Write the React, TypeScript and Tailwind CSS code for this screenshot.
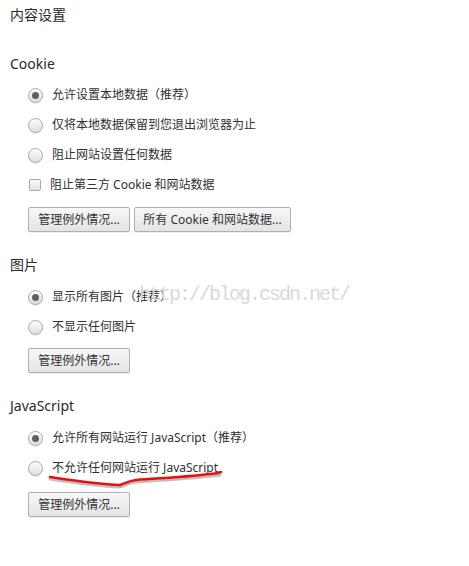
import type {ReactNode} from "react";

const font = {fontFamily: '"Noto Sans", "Noto Sans CJK SC", sans-serif'};

function Radio({checked, label}: {checked?: boolean; label: string}) {
    return (
        <div className="flex h-[30px] items-center pl-[18px]">
            <span className="flex h-[15px] w-[15px] items-center justify-center rounded-full border border-[#a9a9a9] bg-gradient-to-b from-[#fdfdfd] to-[#dedede] shadow-[0_1px_1px_rgba(0,0,0,0.08)]">
                {checked && <span className="h-[7px] w-[7px] rounded-full bg-[#5f5f5f]" />}
            </span>
            <span className="ml-[9px] text-[12px] text-[#303030]">{label}</span>
        </div>
    );
}

function Checkbox({label}: {label: string}) {
    return (
        <div className="flex h-[30px] items-center pl-[19px]">
            <span className="h-[12px] w-[12px] rounded-[2px] border border-[#a9a9a9] bg-gradient-to-b from-[#fbfbfb] to-[#e2e2e2]" />
            <span className="ml-[9px] text-[12px] text-[#303030]">{label}</span>
        </div>
    );
}

function Button({children, w}: {children: ReactNode; w: string}) {
    return (
        <button className={`flex h-[25px] ${w} items-center justify-center rounded-[2px] border border-[#b0b0b0] bg-gradient-to-b from-[#f7f7f7] to-[#e4e4e4] text-[12px] text-[#333] shadow-[0_1px_0_rgba(0,0,0,0.06)]`}>
            {children}
        </button>
    );
}

function Heading({children, mt}: {children: ReactNode; mt: string}) {
    return <div className={`${mt} flex h-[20px] items-center text-[14px] text-[#2a2a2a]`}>{children}</div>;
}

export default function App() {
    return (
        <div className="relative h-[566px] w-[469px] overflow-hidden bg-white" style={font}>
            <div className="flex flex-col px-[10px] pt-[4px]">
                <div className="flex h-[20px] items-center text-[14px] text-[#2a2a2a]">内容设置</div>

                {/* Cookie */}
                <Heading mt="mt-[29px]">Cookie</Heading>
                <div className="mt-[7px] flex flex-col">
                    <Radio checked label="允许设置本地数据（推荐）" />
                    <Radio label="仅将本地数据保留到您退出浏览器为止" />
                    <Radio label="阻止网站设置任何数据" />
                    <Checkbox label="阻止第三方 Cookie 和网站数据" />
                </div>
                <div className="mt-[7px] flex gap-[4px] pl-[18px]">
                    <Button w="w-[102px]">管理例外情况...</Button>
                    <Button w="w-[157px]">所有 Cookie 和网站数据...</Button>
                </div>

                {/* 图片 */}
                <Heading mt="mt-[22px]">图片</Heading>
                <div className="mt-[8px] flex flex-col">
                    <Radio checked label="显示所有图片（推荐）" />
                    <Radio label="不显示任何图片" />
                </div>
                <div className="mt-[6px] flex pl-[18px]">
                    <Button w="w-[102px]">管理例外情况...</Button>
                </div>

                {/* JavaScript */}
                <Heading mt="mt-[22px]">JavaScript</Heading>
                <div className="mt-[8px] flex flex-col">
                    <Radio checked label="允许所有网站运行 JavaScript（推荐）" />
                    <Radio label="不允许任何网站运行 JavaScript" />
                </div>
                <div className="mt-[9px] flex pl-[18px]">
                    <Button w="w-[102px]">管理例外情况...</Button>
                </div>
            </div>

            {/* watermark */}
            <div
                className="pointer-events-none absolute left-[139px] top-[283px] text-[20px] leading-[24px] tracking-[-2px] text-[#d9d9d9]"
                style={{fontFamily: '"Liberation Mono", monospace'}}
            >
                http://blog.csdn.net/
            </div>

            {/* red underline */}
            <svg className="pointer-events-none absolute left-0 top-0" width="469" height="566">
                <path
                    d="M50 479 C 70 482, 95 486, 120 487 C 126 485, 128 483, 136 482 C 160 480, 190 479, 220 475"
                    fill="none"
                    stroke="rgba(0,0,0,0.25)"
                    strokeWidth="3"
                    strokeLinecap="round"
                />
                <path
                    d="M50 477 C 70 480, 95 484, 120 485 C 126 483, 128 481, 136 480 C 160 478, 190 477, 218 473 L 221 472"
                    fill="none"
                    stroke="#e8100c"
                    strokeWidth="2.4"
                    strokeLinecap="round"
                />
            </svg>
        </div>
    );
}
